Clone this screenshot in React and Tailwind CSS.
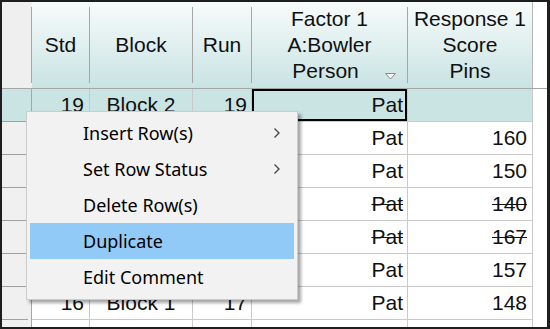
import React from "react";

/* ─── Data ───────────────────────────────────────────────────── */

const COLS = "grid-cols-[30px_58px_103px_59px_156px_125px_1fr]";

const ROWS = [
  { std: 19, block: "Block 2", run: 19, person: "Pat", score: "", selected: true },
  { std: 5, block: "Block 1", run: 5, person: "Pat", score: "160" },
  { std: 12, block: "Block 2", run: 12, person: "Pat", score: "150" },
  { std: 8, block: "Block 1", run: 8, person: "Pat", score: "140", ignored: true },
  { std: 3, block: "Block 1", run: 3, person: "Pat", score: "167", ignored: true },
  { std: 14, block: "Block 2", run: 14, person: "Pat", score: "157" },
  { std: 16, block: "Block 1", run: 17, person: "Pat", score: "148" },
  { std: "", block: "", run: "", person: "", score: "" },
];

const MENU = [
  { label: "Insert Row(s)", sub: true },
  { label: "Set Row Status", sub: true },
  { label: "Delete Row(s)" },
  { label: "Duplicate", active: true },
  { label: "Edit Comment" },
];

/* ─── Pieces ─────────────────────────────────────────────────── */

function HeadCell({ children, extra }) {
  return (
    <div className="relative flex h-full">
      <div className="flex-1 flex flex-col items-center justify-center leading-[26px]">{children}</div>
      <div className="w-px my-[5px] bg-[#a6a6a6]" />
      {extra}
    </div>
  );
}

function Chevron() {
  return (
    <svg width="8" height="12" viewBox="0 0 8 12" className="absolute right-[13px] top-1/2 -translate-y-1/2">
      <polyline points="1.5,1.5 6,6 1.5,10.5" fill="none" stroke="#444" strokeWidth="1.3" />
    </svg>
  );
}

/* ─── Page ───────────────────────────────────────────────────── */

export default function App() {
  return (
    <div
      className="relative w-[550px] h-[329px] overflow-hidden bg-white border-[#1e1e1e] border-l-2 border-t-2 border-b-2 border-r-[3px] text-[21px] text-[#101010]"
      style={{ fontFamily: '"Liberation Sans", Arial, sans-serif' }}
    >
      {/* Header */}
      <div className={`grid ${COLS} h-[87px] border-b border-[#a6a6a6] bg-gradient-to-b from-[#f7fbfb] to-[#c9e3e3]`}>
        <div className="flex h-full bg-[#efefef]">
          <div className="flex-1" />
          <div className="w-px my-[5px] bg-[#a6a6a6]" />
        </div>
        <HeadCell>Std</HeadCell>
        <HeadCell>Block</HeadCell>
        <HeadCell>Run</HeadCell>
        <HeadCell
          extra={
            <svg width="11" height="7" viewBox="0 0 11 7" className="absolute left-[133px] top-[71px]">
              <polygon points="0.5,0.5 10.5,0.5 5.5,6" fill="#f4f9f9" stroke="#8c8c8c" strokeWidth="1" />
            </svg>
          }
        >
          <span>Factor 1</span>
          <span>A:Bowler</span>
          <span className="pr-2">Person</span>
        </HeadCell>
        <div className="flex h-full border-r border-[#b5b5b5]">
          <div className="flex-1 flex flex-col items-center justify-center leading-[26px]">
            <span>Response 1</span>
            <span>Score</span>
            <span>Pins</span>
          </div>
        </div>
        <div className="bg-white" />
      </div>

      {/* Rows */}
      {ROWS.map((r, i) => {
        const bg = r.selected ? "bg-[#cae4e4]" : "bg-white";
        const strike = r.ignored ? "line-through decoration-1" : "";
        return (
          <div key={i} className={`grid ${COLS} h-[33px]`}>
            <div className={`${r.selected ? "bg-[#cae4e4]" : "bg-[#f0f0f0]"} border-r border-[#a6a6a6] flex flex-col justify-end`}>
              <div className="h-px w-[26px] bg-[#a0a0a0]" />
            </div>
            <div className={`${bg} border-r border-b border-[#c9c9c9] flex items-center justify-end pr-[5px]`}>{r.std}</div>
            <div className={`${bg} border-r border-b border-[#c9c9c9] flex items-center justify-center`}>{r.block}</div>
            <div className={`${bg} border-r border-b border-[#c9c9c9] flex items-center justify-end pr-[4px]`}>{r.run}</div>
            <div
              className={`${bg} border-r border-b border-[#c9c9c9] flex items-center justify-end pr-[4px] ${
                r.selected ? "shadow-[inset_0_0_0_2px_#000]" : ""
              }`}
            >
              <span className={strike}>{r.person}</span>
            </div>
            <div className={`${bg} border-r border-b border-[#c9c9c9] flex items-center justify-end pr-[5px]`}>
              <span className={strike}>{r.score}</span>
            </div>
            <div className="bg-white" />
          </div>
        );
      })}

      {/* Context menu */}
      <div
        className="absolute left-[24px] top-[109px] w-[272px] h-[189px] bg-[#f2f2f2] border border-[#cccccc] shadow-[3px_3px_3px_rgba(0,0,0,0.35)] pt-[3px] px-[3px] text-[18px] text-black"
        style={{ fontFamily: '"Noto Sans", "Open Sans", sans-serif' }}
      >
        {MENU.map((m) => (
          <div
            key={m.label}
            className={`relative h-[36px] flex items-center pl-[53px] ${m.active ? "bg-[#91c9f7]" : ""}`}
          >
            {m.label}
            {m.sub && <Chevron />}
          </div>
        ))}
      </div>
    </div>
  );
}
